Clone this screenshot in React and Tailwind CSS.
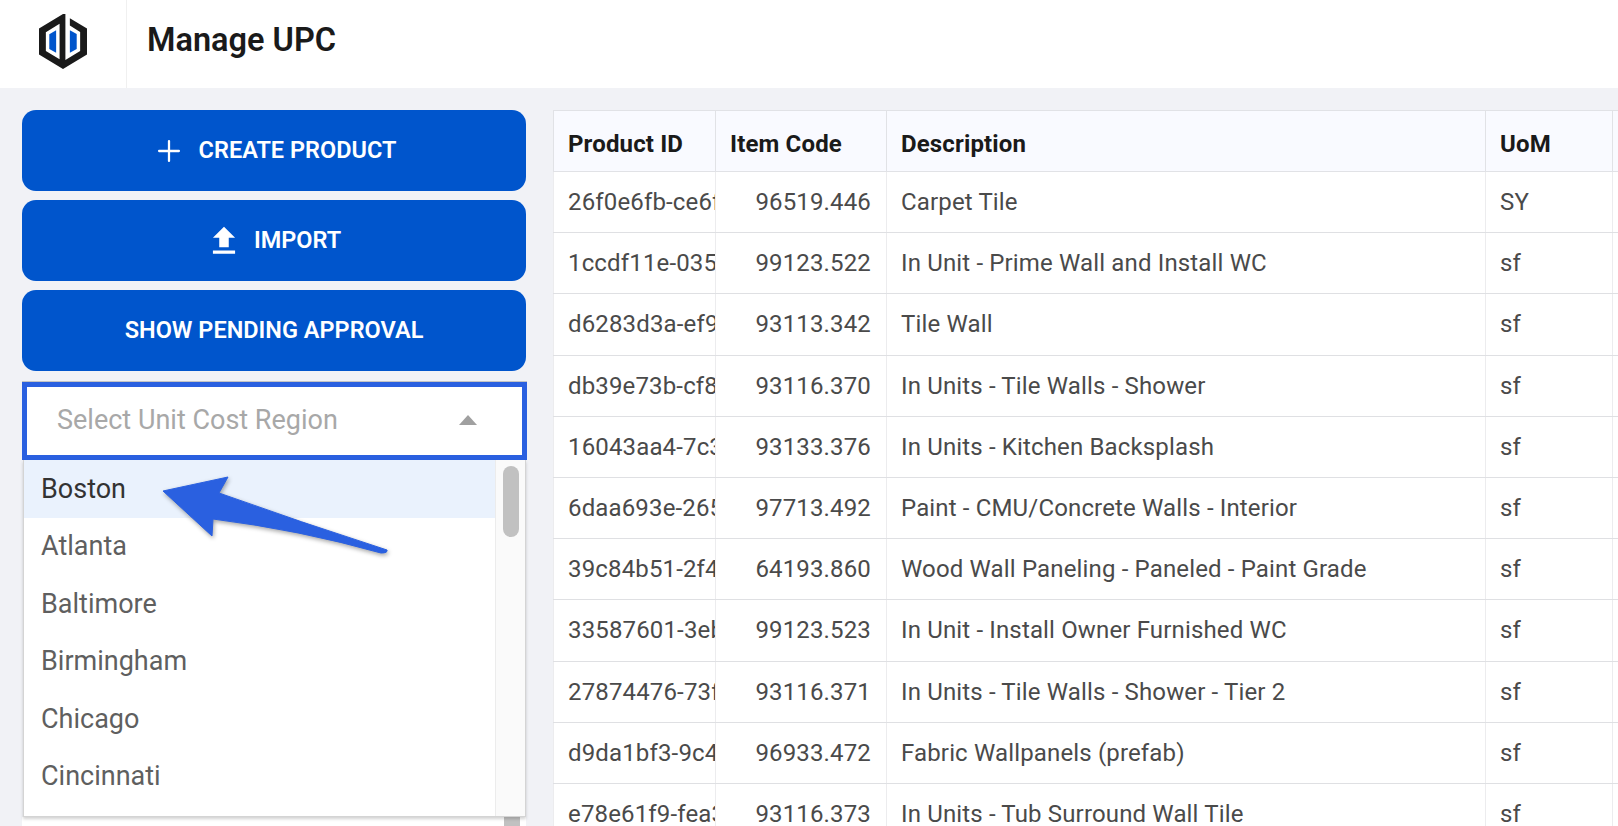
import { Plus } from 'lucide-react';

const ROWS = [
  ['26f0e6fb-ce6f', '96519.446', 'Carpet Tile', 'SY'],
  ['1ccdf11e-035d', '99123.522', 'In Unit - Prime Wall and Install WC', 'sf'],
  ['d6283d3a-ef9c', '93113.342', 'Tile Wall', 'sf'],
  ['db39e73b-cf8a', '93116.370', 'In Units - Tile Walls - Shower', 'sf'],
  ['16043aa4-7c3e', '93133.376', 'In Units - Kitchen Backsplash', 'sf'],
  ['6daa693e-2654', '97713.492', 'Paint - CMU/Concrete Walls - Interior', 'sf'],
  ['39c84b51-2f4e', '64193.860', 'Wood Wall Paneling - Paneled - Paint Grade', 'sf'],
  ['33587601-3eb1', '99123.523', 'In Unit - Install Owner Furnished WC', 'sf'],
  ['27874476-73f9', '93116.371', 'In Units - Tile Walls - Shower - Tier 2', 'sf'],
  ['d9da1bf3-9c4d', '96933.472', 'Fabric Wallpanels (prefab)', 'sf'],
  ['e78e61f9-fea3', '93116.373', 'In Units - Tub Surround Wall Tile', 'sf'],
];

const REGIONS = ['Boston', 'Atlanta', 'Baltimore', 'Birmingham', 'Chicago', 'Cincinnati'];

function Logo() {
  return (
    <svg width="48" height="55" viewBox="0 0 140 160">
      <path
        fill="#1a1a1a"
        fillRule="evenodd"
        d="M77 0 L70 0 L0 42 V118 L70 160 L140 118 V42 L90 12 V33 L120 52 V108 L77 134 Z M20 53 L60 28 V132 L20 108 Z"
      />
      <path fill="#0055cc" d="M30 59 L50 47 V113 L30 102 Z" />
      <path fill="#0055cc" d="M90 47 L110 58 V102 L90 113 Z" />
    </svg>
  );
}

function ActionButton({ children }) {
  return (
    <button className="flex h-[81px] w-full items-center justify-center rounded-[14px] bg-[#0055cc] text-[23.5px] font-semibold text-white">
      {children}
    </button>
  );
}

function RegionSelect() {
  return (
    <div className="relative mt-[11px]">
      <div className="-mr-px flex h-[78px] items-center justify-between border-[5px] border-[#2a60e0] bg-white pb-[2px] pl-[30px] pr-[45px] text-[27px] text-[#a8a8a8] shadow-[0_-1px_0_#c4c4c4]">
        <span>Select Unit Cost Region</span>
        <span className="h-0 w-0 border-x-[9px] border-b-[10px] border-x-transparent border-b-[#a0a0a0]" />
      </div>
      <div className="absolute left-px right-0 top-full z-10 flex h-[357px] border-x border-b border-[#d4d4d4] bg-white shadow-[0_2px_3px_rgba(0,0,0,0.18)]">
        <ul className="flex-1 text-[27px] text-[#5f5f5f]">
          {REGIONS.map((r, i) => (
            <li
              key={r}
              className={`flex h-[57.5px] items-center pl-[17px] ${i === 0 ? 'bg-[#eaf2fd] text-[#333333]' : ''}`}
            >
              {r}
            </li>
          ))}
        </ul>
        <div className="w-[30px] border-l border-[#ececec] bg-[#fafafa] px-[7px] pt-[6px]">
          <div className="h-[71px] w-[16px] rounded-lg bg-[#c1c1c1]" />
        </div>
      </div>
    </div>
  );
}

function Arrow() {
  return (
    <svg
      className="pointer-events-none absolute left-[150px] top-[465px] z-20 drop-shadow-[1px_2px_2px_rgba(0,0,0,0.35)]"
      width="250"
      height="100"
      viewBox="150 465 250 100"
    >
      <path
        fill="#2a60e0"
        stroke="#2a60e0"
        strokeLinejoin="round"
        strokeWidth="1"
        d="M163 491 L228 477 L219 493 Q300 522 387 550 Q388 553 381 553 Q300 530 213 519 L212 536 Z"
      />
    </svg>
  );
}

export default function App() {
  return (
    <div className="relative h-screen overflow-hidden bg-[#f1f2f6] font-['Roboto',sans-serif]">
      <header className="flex h-[88px] bg-white">
        <div className="flex w-[127px] items-center justify-center border-r border-[#f0f0f0] pb-[6px]">
          <Logo />
        </div>
        <h1 className="flex items-center pb-[8px] pl-[20px] text-[32.5px] font-semibold text-[#1a1a1a]">Manage UPC</h1>
      </header>

      <div className="flex gap-[27px] pl-[22px] pt-[22px]">
        <aside className="flex w-[504px] shrink-0 flex-col">
          <div className="flex flex-col gap-[9px]">
            <ActionButton>
              <Plus size={34} strokeWidth={1.6} className="mr-[13px]" />
              CREATE PRODUCT
            </ActionButton>
            <ActionButton>
              <svg width="38" height="38" viewBox="0 0 24 24" fill="currentColor" className="-ml-[2px] mr-[11px]">
                <path d="M9 16h6v-6h4l-7-7-7 7h4zm-4 2h14v2H5z" />
              </svg>
              IMPORT
            </ActionButton>
            <ActionButton>SHOW PENDING APPROVAL</ActionButton>
          </div>
          <RegionSelect />
          <div className="mt-[357px] flex h-[40px] justify-end bg-white pr-[6px]">
            <div className="h-full w-[16px] bg-[#c1c1c1]" />
          </div>
        </aside>

        <main className="min-w-0 flex-1">
          <table className="w-[1100px] table-fixed border-collapse bg-white text-[24px] tracking-[0.15px] text-[#4a4a4a]">
            <colgroup>
              <col className="w-[162px]" />
              <col className="w-[171px]" />
              <col className="w-[599px]" />
              <col className="w-[127px]" />
              <col />
            </colgroup>
            <thead>
              <tr className="h-[61px] bg-[#f9faff] text-left font-bold text-[#1a1a1a]">
                {['Product ID', 'Item Code', 'Description', 'UoM', ''].map((h, i) => (
                  <th key={i} className="border border-[#e1e2e6] px-[14px] pt-[6px] font-bold">
                    {h}
                  </th>
                ))}
              </tr>
            </thead>
            <tbody>
              {ROWS.map((r) => (
                <tr key={r[0]} className="h-[61.2px]">
                  <td className="overflow-hidden whitespace-nowrap border border-x-[#ececee] border-y-[#dfe0e3] pl-[14px]">{r[0]}</td>
                  <td className="border border-x-[#ececee] border-y-[#dfe0e3] pl-[14px] pr-[15px] text-right">{r[1]}</td>
                  <td className="border border-x-[#ececee] border-y-[#dfe0e3] px-[14px]">{r[2]}</td>
                  <td className="border border-x-[#ececee] border-y-[#dfe0e3] px-[14px]">{r[3]}</td>
                  <td className="border border-x-[#ececee] border-y-[#dfe0e3]" />
                </tr>
              ))}
            </tbody>
          </table>
        </main>
      </div>
      <Arrow />
    </div>
  );
}
